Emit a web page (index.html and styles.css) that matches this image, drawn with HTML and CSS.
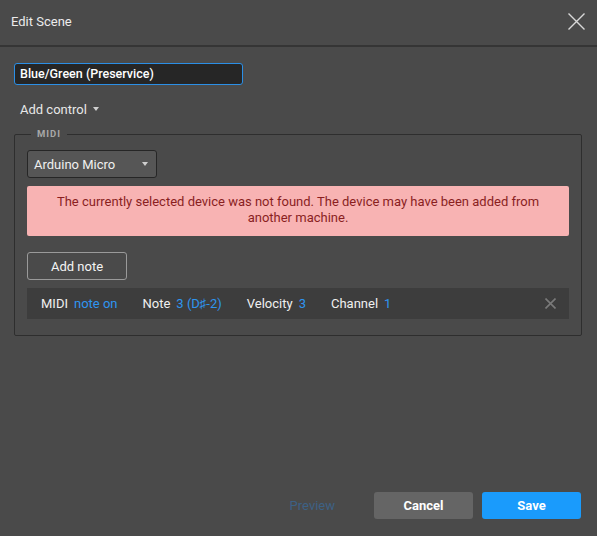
FILE: index.html
```html
<!DOCTYPE html>
<html>
<head>
<meta charset="utf-8">
<link rel="stylesheet" href="styles.css">
</head>
<body>
<div class="dialog">
  <div class="header">
    <div class="title">Edit Scene</div>
    <div class="close">
      <svg width="17" height="17" viewBox="0 0 17 17"><path d="M0.5 0.5L16.5 16.5M16.5 0.5L0.5 16.5" stroke="#d8d8d8" stroke-width="1.4" fill="none"/></svg>
    </div>
  </div>
  <div class="body">
    <div class="name-input">Blue/Green (Preservice)</div>
    <div class="add-control">Add control <span class="caret"></span></div>
    <fieldset class="midi">
      <legend>MIDI</legend>
      <div class="select">Arduino Micro <span class="caret"></span></div>
      <div class="alert">The currently selected device was not found. The device may have been added from another machine.</div>
      <div class="add-note">Add note</div>
      <div class="note-row">
        <span class="lbl">MIDI</span><span class="val">note on</span>
        <span class="lbl">Note</span><span class="val">3 (D♯-2)</span>
        <span class="lbl">Velocity</span><span class="val">3</span>
        <span class="lbl">Channel</span><span class="val">1</span>
        <span class="spacer"></span>
        <svg class="remove" width="11" height="11" viewBox="0 0 11 11"><path d="M0.5 0.5L10.5 10.5M10.5 0.5L0.5 10.5" stroke="#7a7a7a" stroke-width="1.6" fill="none"/></svg>
      </div>
    </fieldset>
  </div>
  <div class="footer">
    <div class="preview">Preview</div>
    <div class="btn cancel">Cancel</div>
    <div class="btn save">Save</div>
  </div>
</div>
</body>
</html>
```
FILE: styles.css
```css
html, body {
  margin: 0;
  padding: 0;
  background: #4a4a4a;
}
body {
  font-family: Roboto, "Liberation Sans", sans-serif;
  color: #f2f2f2;
  font-size: 13px;
}
.dialog {
  width: 597px;
  height: 536px;
  display: flex;
  flex-direction: column;
}
.header {
  border-bottom: 2px solid #353535;
  display: flex;
  align-items: center;
  justify-content: space-between;
  padding: 0 12px 0 11px;
  box-sizing: border-box;
  height: 47px;
}
.title {
  font-size: 13px;
  color: #ececec;
  margin-top: -3px;
}
.close {
  display: flex;
  margin-top: -3px;
}
.body {
  padding: 16px 15px 0 14px;
  flex: 1;
}
.name-input {
  width: 229px;
  height: 22px;
  box-sizing: border-box;
  background: #262626;
  border: 1px solid #2b8fe6;
  border-radius: 3px;
  padding: 0 5px;
  line-height: 20px;
  font-size: 12.5px;
  font-weight: 500;
  color: #fff;
}
.add-control {
  margin: 14px 0 0 6px;
  font-size: 13px;
  color: #e8e8e8;
  display: flex;
  align-items: center;
  gap: 6px;
  height: 20px;
}
.caret {
  display: inline-block;
  width: 0;
  height: 0;
  border-left: 3.5px solid transparent;
  border-right: 3.5px solid transparent;
  border-top: 4px solid #cfcfcf;
}
.midi {
  margin: 9px 0 0 0;
  border: 1px solid #2e2e2e;
  border-radius: 2px;
  padding: 10px 12px 16px 12px;
  min-width: 0;
}
.midi legend {
  font-size: 9.5px;
  font-weight: 700;
  color: #a8a8a8;
  letter-spacing: 1px;
  padding: 0 6px 0 6px;
  margin-left: 4px;
  line-height: 12px;
}
.select {
  width: 130px;
  height: 28px;
  box-sizing: border-box;
  background: #565656;
  border: 1px solid #262626;
  border-radius: 3px;
  display: flex;
  align-items: center;
  justify-content: space-between;
  padding: 0 8px 0 6px;
  font-size: 13px;
  color: #f0f0f0;
}
.alert {
  margin-top: 8px;
  background: #f8b3b3;
  color: #8a1f1f;
  border-radius: 2px;
  text-align: center;
  padding: 8px 12px;
  line-height: 16px;
  font-size: 13px;
  height: 50px;
  box-sizing: border-box;
}
.add-note {
  margin-top: 16px;
  width: 100px;
  height: 28px;
  box-sizing: border-box;
  border: 1px solid #9a9a9a;
  border-radius: 3px;
  display: flex;
  align-items: center;
  justify-content: center;
  font-size: 13px;
  color: #f4f4f4;
}
.note-row {
  margin-top: 8px;
  height: 31px;
  background: #3d3d3d;
  display: flex;
  align-items: center;
  padding: 0 13px 0 14px;
  font-size: 13px;
}
.lbl { color: #f0f0f0; margin-right: 6px; }
.val { color: #2e95f0; margin-right: 25px; }
.spacer { flex: 1; }
.footer {
  display: flex;
  justify-content: flex-end;
  align-items: center;
  gap: 9px;
  padding: 0 16px 17px 0;
}
.preview {
  color: #3d6185;
  font-size: 13px;
  margin-right: 30px;
}
.btn {
  width: 99px;
  height: 27px;
  border-radius: 3px;
  display: flex;
  align-items: center;
  justify-content: center;
  font-weight: 700;
  font-size: 13px;
  color: #fff;
}
.cancel { background: #656565; }
.save { background: #1a9bfc; }
```
